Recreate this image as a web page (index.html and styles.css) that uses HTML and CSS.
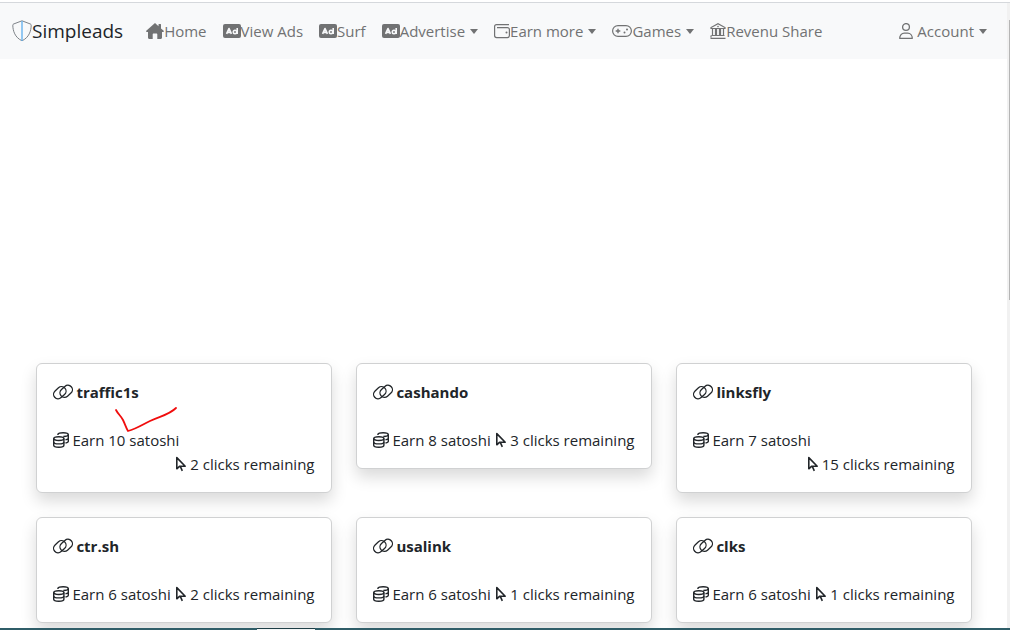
FILE: index.html
```html
<!DOCTYPE html>
<html lang="en">
<head>
    <meta charset="UTF-8">
    <meta name="viewport" content="width=device-width, initial-scale=1">
    <title>Simpleads</title>
    <link rel="stylesheet" href="styles.css">
</head>
<body>
    <!-- Shared icons -->
    <svg class="sprite" aria-hidden="true">
        <symbol id="icon-ad" viewBox="0 0 18 16">
            <rect x="0" y="1" width="18" height="14" rx="2" fill="currentColor"/>
            <path d="M3.6 10.8 6 5.6l2.4 5.2M4.6 9.4h2.8" fill="none" stroke="#f8f9fa" stroke-width="1.7" stroke-linejoin="round"/>
            <circle cx="12" cy="9" r="1.7" fill="none" stroke="#f8f9fa" stroke-width="1.6"/>
            <path d="M14.2 5v6" stroke="#f8f9fa" stroke-width="1.6"/>
        </symbol>
        <symbol id="icon-link" viewBox="0 0 20 16">
            <g fill="none" stroke="currentColor" stroke-width="1.3">
                <rect x="0" y="4.2" width="13.6" height="9" rx="4.5" transform="rotate(-42 6.8 8.7)"/>
                <rect x="6.400" y="2.800" width="13.600" height="9" rx="4.500" transform="rotate(-42 13.200 7.300)"/>
            </g>
        </symbol>
        <symbol id="icon-coins" viewBox="0 0 16 16">
            <g fill="none" stroke="currentColor" stroke-width="1.4">
                <ellipse cx="5.8" cy="6.6" rx="5.1" ry="1.9"/>
                <path d="M.7 6.6v6.6c0 1.1 2.3 2 5.100 2s5.100-.9 5.100-2V6.600"/>
                <path d="M.7 9.900c0 1.100 2.300 2 5.100 2s5.100-.9 5.100-2"/>
                <path d="M4.900 3V2.600c0-1.100 2.300-1.900 5.200-1.900s5.200.8 5.200 1.900-2.300 1.900-5 1.900"/>
                <path d="M15.300 2.600v6.600c0 .9-1.100 1.500-2.800 1.800M15.300 5.900c0 .9-1.100 1.500-2.800 1.800"/>
            </g>
        </symbol>
        <symbol id="icon-pointer" viewBox="0 0 10 16">
            <path d="M.8 1.600v11.200l2.700-2.500h5.700zM4.300 10.400l2 4.400" fill="none" stroke="currentColor" stroke-width="1.600" stroke-linejoin="round"/>
        </symbol>
    </svg>

    <div class="window">
        <div class="page">
            <nav class="navbar">
                <a class="navbar-brand" href="/">
                    <svg class="icon-brand" viewBox="0 0 20 22" aria-hidden="true">
                        <path d="M10 .8 18.4 4c.5.2.8.6.8 1.2-.1 5.600-2 12.200-9.200 15.600C2.800 17.400.9 10.800.8 5.200c0-.6.3-1 .8-1.200z" fill="none" stroke="#6f757b" stroke-width=".9"/>
                        <path d="M10 1v20" stroke="#68b4ee" stroke-width="1.400"/>
                    </svg>Simpleads</a>
                <ul class="navbar-nav">
                    <li><a class="nav-link" href="/dashboard"><svg class="icon-18" viewBox="0 0 18 16" aria-hidden="true">
                        <path d="M9 0 0 8.100c0 .6.4.9 1 .9h1v5.500C2 15.400 2.600 16 3.500 16h3.200v-4.500c0-.6.4-1 1-1h2.600c.6 0 1 .4 1 1V16h3.200c.9 0 1.500-.6 1.500-1.500V9h1c.6 0 1-.4 1-.9L15 5.400V1.500c0-.3-.2-.5-.5-.5h-1.500c-.3 0-.5.2-.5.5v1.700z" fill="currentColor"/>
                    </svg>Home</a></li>
                    <li><a class="nav-link" href="/ptc"><svg class="icon-18" aria-hidden="true"><use href="#icon-ad"/></svg>View Ads</a></li>
                    <li><a class="nav-link" href="/surf"><svg class="icon-18" aria-hidden="true"><use href="#icon-ad"/></svg>Surf</a></li>
                    <li><a class="nav-link dropdown" href="#"><svg class="icon-18" aria-hidden="true"><use href="#icon-ad"/></svg>Advertise</a></li>
                    <li><a class="nav-link dropdown" href="#"><svg class="icon-16" viewBox="0 0 16 16" aria-hidden="true">
                        <path d="M15 1.600H2.600c-1.100 0-2 .9-2 2v9c0 1.100.9 2 2 2h10.800c1.100 0 2-.9 2-2v-6c0-1.100-.9-2-2-2H3" fill="none" stroke="currentColor" stroke-width="1.200"/>
                        <circle cx="12.500" cy="9.500" r="1" fill="currentColor"/>
                    </svg>Earn more</a></li>
                    <li><a class="nav-link dropdown" href="#"><svg class="icon-20" viewBox="0 0 20 16" aria-hidden="true">
                        <rect x=".6" y="2.600" width="18.800" height="10.800" rx="5.400" fill="none" stroke="currentColor" stroke-width="1.200"/>
                        <path d="M6 5.700v4.600M3.700 8h4.600" stroke="currentColor" stroke-width="1.400"/>
                        <circle cx="15" cy="6.500" r="1" fill="currentColor"/>
                        <circle cx="12.500" cy="9.500" r="1" fill="currentColor"/>
                    </svg>Games</a></li>
                    <li><a class="nav-link" href="/revenue"><svg class="icon-16" viewBox="0 0 16 16" aria-hidden="true">
                        <path d="M1 5.500v-1L8 .7l7 3.800v1zM2.500 6v6M5.500 6v6M6.500 6v6M9.500 6v6M10.500 6v6M13.500 6v6M1.500 12.500h13M.5 15.300h15M1 12.500v2" fill="none" stroke="currentColor" stroke-width="1.200"/>
                        <circle cx="8" cy="3.600" r=".8" fill="currentColor"/>
                    </svg>Revenu Share</a></li>
                </ul>
                <a class="nav-link dropdown account" href="#"><svg class="icon-14" viewBox="0 0 14 16" aria-hidden="true">
                    <circle cx="7" cy="4" r="3.400" fill="none" stroke="currentColor" stroke-width="1.300"/>
                    <path d="M.7 15.300c0-3 2-5.200 4.600-5.200h3.400c2.600 0 4.600 2.200 4.600 5.200z" fill="none" stroke="currentColor" stroke-width="1.300" stroke-linejoin="round"/>
                </svg> Account</a>
            </nav>

            <main class="links">
                <section class="card">
                    <h2 class="card-title"><svg class="icon-20" aria-hidden="true"><use href="#icon-link"/></svg> traffic1s</h2>
                    <div class="card-row">
                        <span><svg class="icon-16" aria-hidden="true"><use href="#icon-coins"/></svg> Earn 10 satoshi</span>
                        <span class="clicks"><svg class="icon-10" aria-hidden="true"><use href="#icon-pointer"/></svg> 2 clicks remaining</span>
                    </div>
                    <svg class="check-mark" viewBox="0 0 64 28" aria-hidden="true">
                        <path d="M2 4c2 4 5 6 7 10 2 4 3 8 5 11 8-2 14-6 22-10 10-5 19-6 26-13" fill="none" stroke="#f00d0d" stroke-width="1.800" stroke-linecap="round" stroke-linejoin="round"/>
                    </svg>
                </section>
                <section class="card">
                    <h2 class="card-title"><svg class="icon-20" aria-hidden="true"><use href="#icon-link"/></svg> cashando</h2>
                    <div class="card-row">
                        <span><svg class="icon-16" aria-hidden="true"><use href="#icon-coins"/></svg> Earn 8 satoshi</span>
                        <span class="clicks"><svg class="icon-10" aria-hidden="true"><use href="#icon-pointer"/></svg> 3 clicks remaining</span>
                    </div>
                </section>
                <section class="card">
                    <h2 class="card-title"><svg class="icon-20" aria-hidden="true"><use href="#icon-link"/></svg> linksfly</h2>
                    <div class="card-row">
                        <span><svg class="icon-16" aria-hidden="true"><use href="#icon-coins"/></svg> Earn 7 satoshi</span>
                        <span class="clicks"><svg class="icon-10" aria-hidden="true"><use href="#icon-pointer"/></svg> 15 clicks remaining</span>
                    </div>
                </section>
                <section class="card">
                    <h2 class="card-title"><svg class="icon-20" aria-hidden="true"><use href="#icon-link"/></svg> ctr.sh</h2>
                    <div class="card-row">
                        <span><svg class="icon-16" aria-hidden="true"><use href="#icon-coins"/></svg> Earn 6 satoshi</span>
                        <span class="clicks"><svg class="icon-10" aria-hidden="true"><use href="#icon-pointer"/></svg> 2 clicks remaining</span>
                    </div>
                </section>
                <section class="card">
                    <h2 class="card-title"><svg class="icon-20" aria-hidden="true"><use href="#icon-link"/></svg> usalink</h2>
                    <div class="card-row">
                        <span><svg class="icon-16" aria-hidden="true"><use href="#icon-coins"/></svg> Earn 6 satoshi</span>
                        <span class="clicks"><svg class="icon-10" aria-hidden="true"><use href="#icon-pointer"/></svg> 1 clicks remaining</span>
                    </div>
                </section>
                <section class="card">
                    <h2 class="card-title"><svg class="icon-20" aria-hidden="true"><use href="#icon-link"/></svg> clks</h2>
                    <div class="card-row">
                        <span><svg class="icon-16" aria-hidden="true"><use href="#icon-coins"/></svg> Earn 6 satoshi</span>
                        <span class="clicks"><svg class="icon-10" aria-hidden="true"><use href="#icon-pointer"/></svg> 1 clicks remaining</span>
                    </div>
                </section>
            </main>
        </div>
        <div class="scrollbar"><div class="scrollbar-thumb"></div></div>
    </div>
    <div class="taskbar"><div class="taskbar-item"></div></div>
</body>
</html>
```

FILE: styles.css
```css
* {
    box-sizing: border-box;
}

body {
    margin: 0;
    height: 100vh;
    display: flex;
    flex-direction: column;
    overflow: hidden;
    font-family: "Segoe UI", "Open Sans", sans-serif;
    font-size: 15px;
    line-height: 24px;
    color: #212529;
    background-color: #fff;
}

.sprite {
    display: none;
}

/* Browser window: top edge, page and scrollbar */
.window {
    flex: 1;
    min-height: 0;
    display: flex;
    margin-top: 2px;
    border-top: 1px solid #d5d8dc;
}

.page {
    flex: 1;
    min-width: 0;
    overflow: hidden;
}

.scrollbar {
    width: 3px;
    padding: 17px 0 0 2px;
    background-color: #f1f1f1;
}

.scrollbar-thumb {
    height: 46%;
    background-color: #b5b5b5;
}

.taskbar {
    height: 2px;
    background-color: #2f5d68;
}

.taskbar-item {
    width: 58px;
    height: 2px;
    margin-left: 257px;
    background-color: #f3f6f7;
    border-top: 1px solid #1d3d45;
}

/* Icons */
svg {
    height: 16px;
    vertical-align: -2px;
}

.icon-10 { width: 10px; }
.icon-14 { width: 14px; }
.icon-16 { width: 16px; }
.icon-18 { width: 18px; }
.icon-20 { width: 20px; }

.icon-brand {
    width: 20px;
    height: 22px;
    vertical-align: -4px;
}

/* Navbar */
.navbar {
    display: flex;
    align-items: center;
    height: 56px;
    padding: 0 12px;
    background-color: #f8f9fa;
    white-space: nowrap;
}

.navbar-brand {
    margin-right: 15px;
    font-size: 19px;
    line-height: 30px;
    color: #212529;
    text-decoration: none;
}

.navbar-nav {
    display: flex;
    margin: 0;
    padding: 0;
    list-style: none;
}

.nav-link {
    display: block;
    padding: 8px;
    color: #717273;
    text-decoration: none;
}

.nav-link:hover {
    color: #444;
}

.dropdown::after {
    content: "";
    display: inline-block;
    margin-left: 5px;
    vertical-align: 3px;
    border-top: 5px solid;
    border-right: 4px solid transparent;
    border-left: 4px solid transparent;
}

.account {
    margin-left: auto;
}

/* Short link cards */
.links {
    display: grid;
    grid-template-columns: repeat(3, 1fr);
    align-items: start;
    gap: 24px;
    max-width: 936px;
    margin: 304px auto 24px;
}

.card {
    position: relative;
    padding: 16px;
    background-color: #fff;
    border: 1px solid #d0d1d2;
    border-radius: 6px;
    box-shadow: 0 8px 16px rgba(0, 0, 0, 0.15);
}

.card-title {
    margin: 0 0 24px;
    font-size: 15px;
    font-weight: 700;
    line-height: 24px;
}

.card-row {
    display: flex;
    flex-wrap: wrap;
    justify-content: space-between;
    white-space: nowrap;
}

.clicks {
    margin-left: auto;
}

/* Hand drawn tick over the first card */
.check-mark {
    position: absolute;
    top: 42px;
    left: 77px;
    width: 64px;
    height: 28px;
}
```
